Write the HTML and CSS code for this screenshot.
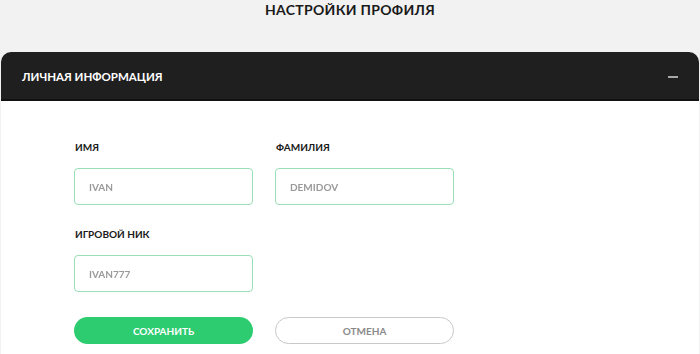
FILE: index.html
```html
<!DOCTYPE html>
<html lang="ru">
<head>
<meta charset="utf-8">
<title>Настройки профиля</title>
<link rel="stylesheet" href="styles.css">
</head>
<body>
<div class="page">
  <h1 class="page-title">НАСТРОЙКИ ПРОФИЛЯ</h1>
  <section class="card">
    <header class="card-head">
      <span class="card-title">ЛИЧНАЯ ИНФОРМАЦИЯ</span>
      <span class="collapse" aria-label="Свернуть"></span>
    </header>
    <div class="card-body">
      <div class="row">
        <label class="field">
          <span class="label">ИМЯ</span>
          <span class="input"><span class="value">IVAN</span></span>
        </label>
        <label class="field">
          <span class="label">ФАМИЛИЯ</span>
          <span class="input"><span class="value">DEMIDOV</span></span>
        </label>
      </div>
      <div class="row">
        <label class="field">
          <span class="label">ИГРОВОЙ НИК</span>
          <span class="input"><span class="value">IVAN777</span></span>
        </label>
      </div>
      <div class="row actions">
        <button class="btn btn-primary">СОХРАНИТЬ</button>
        <button class="btn btn-secondary">ОТМЕНА</button>
      </div>
    </div>
  </section>
</div>
</body>
</html>
```
FILE: styles.css
```css
html, body {
  margin: 0;
  padding: 0;
  background: #f2f2f2;
  font-family: Lato, "Open Sans", "Liberation Sans", sans-serif;
  overflow: hidden;
}
.page {
  width: 700px;
  height: 354px;
}
.page-title {
  margin: 0;
  padding-top: 2px;
  height: 52px;
  box-sizing: border-box;
  text-align: center;
  font-size: 14px;
  font-weight: 700;
  color: #1a1a1a;
  letter-spacing: 0.3px;
  line-height: 16px;
}
.card {
  margin: 0 1px;
  border-radius: 10px 10px 0 0;
  overflow: hidden;
  background: #fff;
  height: 310px;
}
.card-head {
  height: 49px;
  box-sizing: border-box;
  background: #1f1f1f;
  border-bottom: 2px solid #111;
  display: flex;
  align-items: center;
  justify-content: space-between;
  padding: 2px 21px 0 21px;
}
.card-title {
  color: #fff;
  font-size: 11.5px;
  font-weight: 700;
}
.collapse {
  width: 10px;
  height: 2px;
  background: #a8a8a8;
  margin-top: 1px;
}
.card-body {
  padding: 40px 0 0 73px;
}
.row {
  display: flex;
  gap: 22px;
}
.row + .row {
  margin-top: 23px;
}
.field {
  display: flex;
  flex-direction: column;
  width: 179px;
}
.label {
  font-size: 10px;
  font-weight: 700;
  color: #1a1a1a;
  line-height: 12px;
  padding-left: 1px;
  margin-bottom: 15px;
}
.input {
  height: 37px;
  box-sizing: border-box;
  border: 1px solid #9adfb8;
  border-radius: 4px;
  display: flex;
  align-items: center;
  padding-left: 14px;
}
.value {
  font-size: 10px;
  font-weight: 700;
  color: #9a9a9a;
  filter: blur(0.7px);
}
.actions {
  margin-top: 25px !important;
}
.btn {
  width: 179px;
  height: 27px;
  border-radius: 14px;
  font-family: inherit;
  font-size: 10px;
  font-weight: 700;
  cursor: pointer;
  padding: 0;
}
.btn-primary {
  background: #2ecc71;
  border: none;
  color: #fff;
}
.btn-secondary {
  background: #fff;
  border: 1px solid #c8c8c8;
  color: #8a8a8a;
}
```
